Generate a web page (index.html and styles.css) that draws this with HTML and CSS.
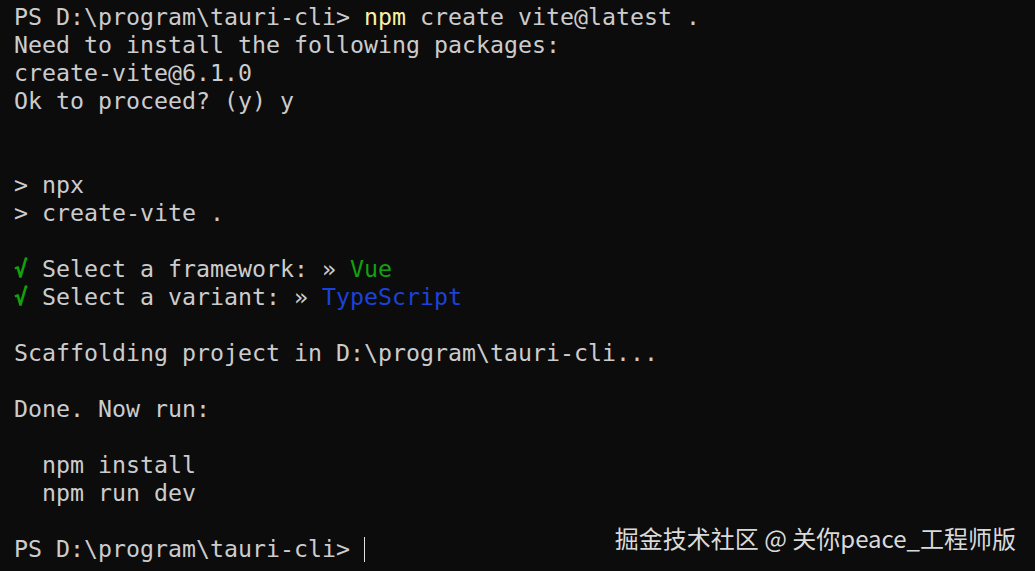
FILE: index.html
```html
<!DOCTYPE html>
<html lang="zh-CN">
<head>
<meta charset="utf-8">
<title>Terminal</title>
<link rel="stylesheet" href="styles.css">
</head>
<body>
<div class="term">
<div class="line">PS D:\program\tauri-cli&gt; <span class="yellow">npm</span> create vite@latest .</div>
<div class="line">Need to install the following packages:</div>
<div class="line">create-vite@6.1.0</div>
<div class="line">Ok to proceed? (y) y</div>
<div class="line"></div>
<div class="line"></div>
<div class="line">&gt; npx</div>
<div class="line">&gt; create-vite .</div>
<div class="line"></div>
<div class="line"><span class="green check">√</span> Select a framework: » <span class="green">Vue</span></div>
<div class="line"><span class="green check">√</span> Select a variant: » <span class="blue">TypeScript</span></div>
<div class="line"></div>
<div class="line">Scaffolding project in D:\program\tauri-cli...</div>
<div class="line"></div>
<div class="line">Done. Now run:</div>
<div class="line"></div>
<div class="line">  npm install</div>
<div class="line">  npm run dev</div>
<div class="line"></div>
<div class="line">PS D:\program\tauri-cli&gt; <span class="cursor"></span></div>
</div>
<div class="watermark">掘金技术社区 @ 关你peace_工程师版</div>
</body>
</html>
```

FILE: styles.css
```css
html, body {
  margin: 0;
  padding: 0;
  background: #0c0c0c;
  width: 1035px;
  height: 571px;
  overflow: hidden;
}
body {
  position: relative;
}
.term {
  padding: 3px 0 0 14px;
  font-family: "DejaVu Sans Mono", "Liberation Mono", monospace;
  font-size: 23.25px;
  color: #cccccc;
}
.line {
  height: 28px;
  line-height: 28px;
  white-space: pre;
}
.yellow { color: #f9f1a5; }
.blue { color: #1b42da; }
.green { color: #13a10e; }
.check { font-weight: bold; }
.cursor {
  display: inline-block;
  width: 1px;
  height: 25px;
  background: #e0e0e0;
  vertical-align: -5px;
}
.watermark {
  position: absolute;
  right: 19px;
  top: 522px;
  font-family: "Noto Sans CJK SC", "Noto Sans", sans-serif;
  font-size: 24px;
  line-height: 32px;
  color: #dadada;
}
```
